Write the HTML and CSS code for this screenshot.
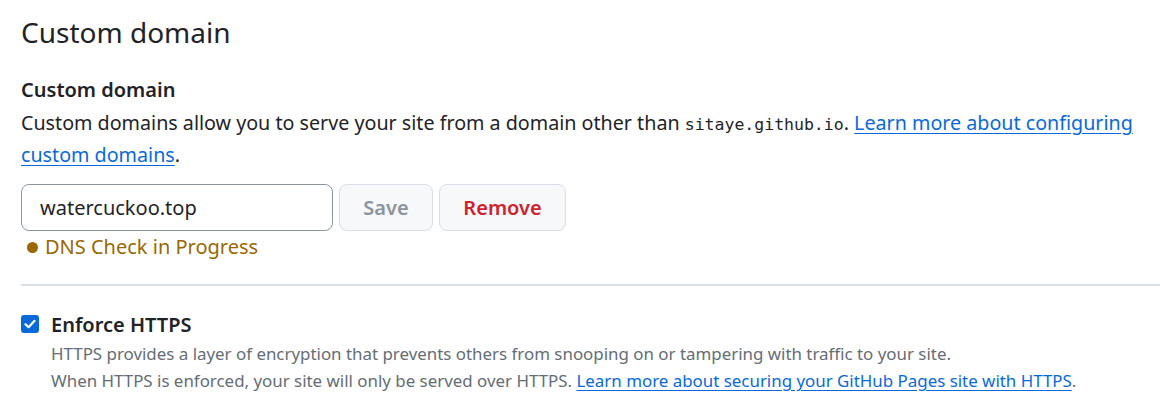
FILE: index.html
```html
<!DOCTYPE html>
<html>
<head>
<meta charset="utf-8">
<link rel="stylesheet" href="styles.css">
</head>
<body>
<div class="page">
  <h2 class="subhead">Custom domain</h2>
  <div class="field">
    <div class="label">Custom domain</div>
    <p class="desc">Custom domains allow you to serve your site from a domain other than <code>sitaye.github.io</code>. <a href="#">Learn more about configuring custom domains</a>.</p>
    <div class="form-row">
      <input class="input" type="text" value="watercuckoo.top">
      <button class="btn btn-disabled">Save</button>
      <button class="btn btn-danger">Remove</button>
    </div>
    <div class="status"><span class="dot"></span>DNS Check in Progress</div>
  </div>
  <hr class="divider">
  <div class="check-row">
    <span class="checkbox"><svg width="12" height="10" viewBox="0 0 12 10"><path d="M1.5 5.2 L4.6 8.2 L10.5 1.8" fill="none" stroke="#fff" stroke-width="2.2" stroke-linecap="round" stroke-linejoin="round"/></svg></span>
    <div class="check-body">
      <div class="check-label">Enforce HTTPS</div>
      <p class="note">HTTPS provides a layer of encryption that prevents others from snooping on or tampering with traffic to your site.<br>When HTTPS is enforced, your site will only be served over HTTPS. <a href="#">Learn more about securing your GitHub Pages site with HTTPS</a>.</p>
    </div>
  </div>
</div>
</body>
</html>
```

FILE: styles.css
```css
html, body {
  margin: 0;
  padding: 0;
  background: #ffffff;
}
body {
  font-family: "Noto Sans", "Open Sans", sans-serif;
  color: #1f2328;
}
.page {
  padding: 10px 0 0 21px;
}
.subhead {
  margin: 0;
  font-size: 28px;
  font-weight: 400;
  line-height: 44px;
  color: #1f2328;
}
.field {
  margin-top: 22px;
}
.label {
  font-size: 20px;
  font-weight: 600;
  line-height: 28px;
}
.desc {
  margin: 3px 0 0;
  font-size: 19.7px;
  line-height: 32px;
}
.desc code {
  font-family: "DejaVu Sans Mono", "Liberation Mono", monospace;
  font-size: 16.5px;
  line-height: 1;
}
a {
  color: #0969da;
  text-decoration: underline;
  text-underline-offset: 3px;
}
.form-row {
  display: flex;
  gap: 6px;
  margin-top: 13px;
}
.input {
  width: 312px;
  height: 47px;
  box-sizing: border-box;
  border: 1px solid #8c959f;
  border-radius: 8px;
  padding: 0 18px;
  font-family: inherit;
  font-size: 20px;
  color: #1f2328;
  background: #fff;
}
.btn {
  height: 47px;
  box-sizing: border-box;
  border: 1px solid #d8dee4;
  border-radius: 8px;
  background: #f6f8fa;
  font-family: inherit;
  font-size: 20px;
  font-weight: 600;
  padding: 0 20px;
}
.btn-disabled {
  color: #8c959f;
  width: 94px;
}
.btn-danger {
  color: #cf222e;
  width: 127px;
}
.status {
  display: flex;
  align-items: center;
  margin-top: 2px;
  padding-left: 6px;
  font-size: 20px;
  line-height: 28px;
  color: #9a6700;
}
.dot {
  width: 11px;
  height: 11px;
  border-radius: 50%;
  background: #9a6700;
  margin-right: 7px;
}
.divider {
  border: 0;
  border-top: 2px solid #d8dee4;
  margin: 23px 0 0;
}
.check-row {
  display: flex;
  margin-top: 27px;
}
.checkbox {
  width: 18px;
  height: 18px;
  border-radius: 3px;
  background: #0969da;
  display: flex;
  align-items: center;
  justify-content: center;
  margin-top: 2px;
  flex-shrink: 0;
}
.check-body {
  margin-left: 12px;
}
.check-label {
  font-size: 20px;
  font-weight: 600;
  line-height: 24px;
}
.note {
  margin: 3px 0 0;
  font-size: 16.9px;
  line-height: 27px;
  color: #656d76;
}
```
